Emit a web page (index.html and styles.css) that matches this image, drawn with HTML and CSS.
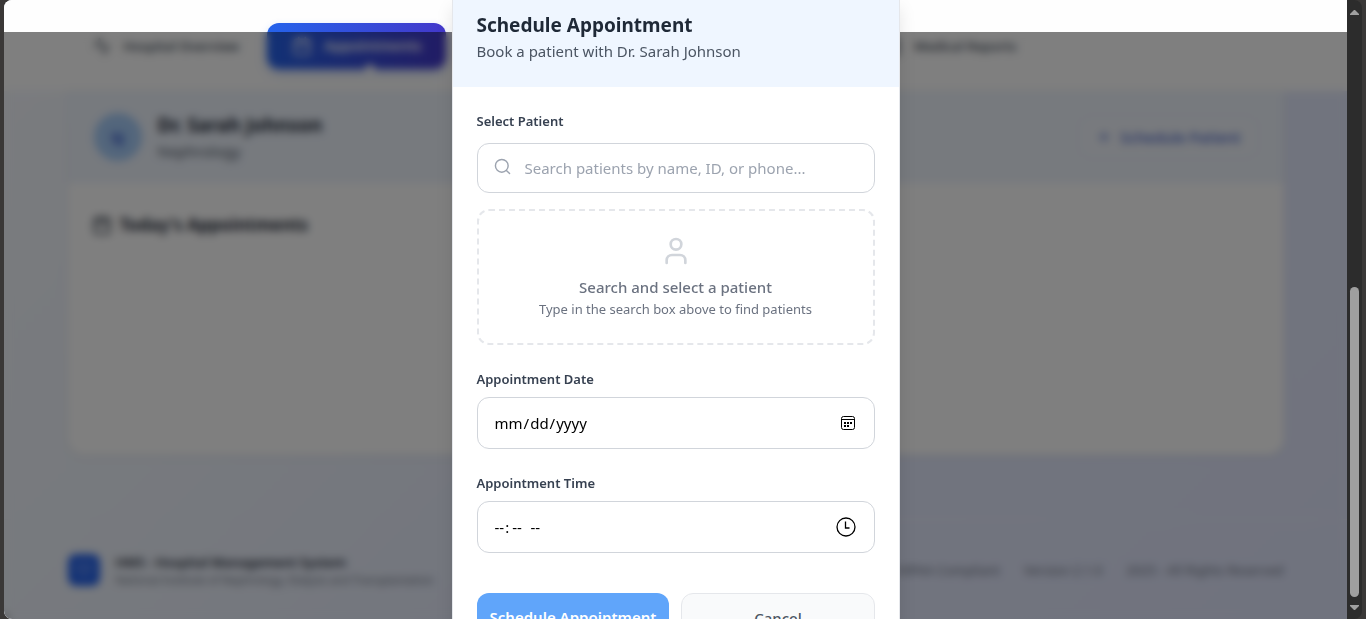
FILE: index.html
```html
<!DOCTYPE html>
<html lang="en">
<head>
<meta charset="utf-8">
<meta name="viewport" content="width=device-width, initial-scale=1">
<title>Schedule Appointment</title>
<link rel="stylesheet" href="styles.css">
</head>
<body>
<div class="window">
  <div class="page">
    <header class="topbar">
      <nav class="container nav">
        <a class="nav-item" href="#overview">
          <svg class="icon" viewBox="0 0 24 24"><path d="M22 12h-4l-3 9L9 3l-3 9H2"/></svg>
          Hospital Overview
        </a>
        <a class="nav-item active" href="#appointments">
          <svg class="icon" viewBox="0 0 24 24"><rect x="3" y="4" width="18" height="18" rx="2"/><path d="M16 2v4M8 2v4M3 10h18"/></svg>
          Appointments
          <span class="nav-pointer"></span>
        </a>
        <span class="nav-space"></span>
        <a class="nav-item" href="#reports">
          <svg class="icon" viewBox="0 0 24 24"><path d="M14 2H6a2 2 0 0 0-2 2v16a2 2 0 0 0 2 2h12a2 2 0 0 0 2-2V8zM14 2v6h6M16 13H8M16 17H8"/></svg>
          Medical Reports
        </a>
      </nav>
    </header>

    <main class="container main">
      <section class="card">
        <div class="doctor">
          <span class="avatar">SJ</span>
          <div class="doctor-text">
            <h1 class="title">Dr. Sarah Johnson</h1>
            <p class="subtitle">Nephrology</p>
          </div>
          <button class="add" type="button">
            <svg class="icon small" viewBox="0 0 24 24"><path d="M12 5v14M5 12h14"/></svg>
            Schedule Patient
          </button>
        </div>
        <div class="today">
          <svg class="icon" viewBox="0 0 24 24"><rect x="3" y="4" width="18" height="18" rx="2"/><path d="M16 2v4M8 2v4M3 10h18"/></svg>
          <h2 class="heading">Today's Appointments</h2>
        </div>
      </section>
    </main>

    <footer class="footer">
      <div class="container footer-row">
        <span class="logo"><svg class="icon small" viewBox="0 0 24 24"><path d="M20.8 4.6a5.5 5.5 0 0 0-7.8 0L12 5.7l-1-1.1a5.5 5.5 0 0 0-7.8 7.8L12 21.2l8.8-8.8a5.5 5.5 0 0 0 0-7.8z"/></svg></span>
        <div class="brand">
          <p class="brand-name">HMS - Hospital Management System</p>
          <p>National Institute of Nephrology, Dialysis and Transplantation</p>
        </div>
        <span>HIPAA Compliant</span>
        <span>Version 2.1.0</span>
        <span>2025 - All Rights Reserved</span>
      </div>
    </footer>

    <div class="backdrop"></div>
    <div class="modal-layer">
      <form class="modal" role="dialog" aria-labelledby="modal-title">
        <div class="modal-head">
          <h2 class="title" id="modal-title">Schedule Appointment</h2>
          <p class="subtitle">Book a patient with Dr. Sarah Johnson</p>
        </div>
        <div class="modal-body">
          <div class="field patient">
            <label class="label" for="patient">Select Patient</label>
            <div class="search">
              <svg class="icon search-icon" viewBox="0 0 24 24"><circle cx="11" cy="11" r="9"/><path d="m22 22-4.500-4.500"/></svg>
              <input class="search-input" id="patient" type="text" placeholder="Search patients by name, ID, or phone...">
            </div>
          </div>
          <div class="empty">
            <svg class="icon user" viewBox="0 0 24 24"><circle cx="12" cy="7" r="4"/><path d="M19 21v-2a4 4 0 0 0-4-4H9a4 4 0 0 0-4 4v2"/></svg>
            <p class="empty-title">Search and select a patient</p>
            <p class="empty-text">Type in the search box above to find patients</p>
          </div>
          <div class="field">
            <label class="label" for="date">Appointment Date</label>
            <input class="input" id="date" type="date">
          </div>
          <div class="field">
            <label class="label" for="time">Appointment Time</label>
            <input class="input" id="time" type="time">
          </div>
          <div class="actions">
            <button class="btn primary" type="submit">Schedule Appointment</button>
            <button class="btn cancel" type="button">Cancel</button>
          </div>
        </div>
      </form>
    </div>
  </div>
  <div class="scrollbar">
    <svg class="arrow" viewBox="0 0 9 5"><path d="M4 0h1l4 4v1H0V4z"/></svg>
    <div class="track"><div class="thumb"></div></div>
    <svg class="arrow" viewBox="0 0 9 5"><path d="M0 0h9v1L5 5H4L0 1z"/></svg>
  </div>
</div>
</body>
</html>
```
FILE: styles.css
```css
* { box-sizing: border-box; }

body {
  margin: 0;
  background: #3a3837;
  color: #1f2937;
  font: 15px/24px "Noto Sans", "Open Sans", sans-serif;
}

h1, h2, p { margin: 0; }
a { color: inherit; text-decoration: none; }
button, input { font: inherit; }

.window {
  display: flex;
  height: 100vh;
  padding: 0 4px;
}

.page {
  position: relative;
  flex: 1;
  min-width: 0;
  overflow: hidden;
  border-radius: 8px 0 0 8px;
  background: linear-gradient(135deg, #f5f8fe, #eff4fc 30%, #e4eafd 65%, #e1e6fd);
}

.container {
  max-width: 1280px;
  margin: 0 auto;
  padding: 0 32px;
}

.icon {
  flex: none;
  width: 20px;
  height: 20px;
  fill: none;
  stroke: currentColor;
  stroke-width: 2;
  stroke-linecap: round;
  stroke-linejoin: round;
}
.icon.small { width: 16px; height: 16px; }

.title { font-size: 19px; line-height: 28px; font-weight: 700; }
.heading { font-size: 17px; line-height: 28px; font-weight: 700; }
.subtitle { color: #4b5563; }

/* Page behind the dialog */
.topbar {
  padding: 23px 0 22px;
  background: #fefefe;
}
.nav { display: flex; gap: 4px; }
.nav-item {
  position: relative;
  display: flex;
  align-items: center;
  gap: 12px;
  padding: 11px 24px;
  border-radius: 12px;
  color: #4b5563;
  font-size: 13px;
  font-weight: 600;
  white-space: nowrap;
}
.nav-item.active {
  padding: 11px 25px;
  background: linear-gradient(90deg, #2563eb, #4338ca);
  box-shadow: 0 4px 8px #2563eb44;
  color: #fff;
  font-size: 14px;
}
.nav-pointer {
  position: absolute;
  bottom: -4px;
  left: 55%;
  width: 8px;
  height: 8px;
  background: #fff;
  transform: rotate(45deg);
}
.nav-space { flex: 0 1 404px; }

.card {
  overflow: hidden;
  min-height: 364px;
  border-radius: 0 0 16px 16px;
  background: #fff;
  box-shadow: 0 1px 4px #0000001a;
}
.doctor {
  display: flex;
  align-items: center;
  gap: 16px;
  padding: 20px 26px;
  background: #eef4fd;
}
.doctor-text { flex: 1; }
.avatar {
  display: grid;
  place-items: center;
  width: 48px;
  height: 48px;
  border-radius: 50%;
  background: #a6ccf8;
  color: #2f50c8;
  font-weight: 700;
}
.add {
  display: flex;
  align-items: center;
  gap: 8px;
  padding: 8px 16px;
  border: 1px solid #e2e9f4;
  border-radius: 12px;
  background: #f1f5fc;
  color: #4361c8;
  font-weight: 500;
}
.today {
  display: flex;
  align-items: center;
  gap: 8px;
  padding: 28px 24px;
}

.footer {
  margin-top: 64px;
  border-top: 1px solid #eceff8;
}
.footer-row {
  display: flex;
  align-items: center;
  gap: 24px;
  padding-top: 32px;
  color: #6b7280;
  font-size: 13px;
  line-height: 16px;
  white-space: nowrap;
}
.logo {
  display: grid;
  place-items: center;
  width: 32px;
  height: 32px;
  margin-right: -8px;
  border-radius: 8px;
  background: #2563eb;
  color: #a9c1f8;
}
.brand { flex: 1; font-size: 11px; }
.brand-name { color: #1f2937; font-size: 13px; line-height: 20px; font-weight: 600; }

/* Dialog */
.backdrop {
  position: absolute;
  inset: 32px 0 0;
  background: #00000080;
  backdrop-filter: blur(4px);
}
.modal-layer {
  position: absolute;
  inset: 0;
  display: flex;
  justify-content: center;
  align-items: flex-start;
}
.modal {
  width: 100%;
  max-width: 448px;
  border: solid #e5e7eb;
  border-width: 0 1px;
  background: #fff;
  box-shadow: 0 8px 16px #0000001a;
}
.modal-head {
  padding: 11px 24px 24px;
  background: #eff6ff;
}
.modal-body {
  display: flex;
  flex-direction: column;
  gap: 24px;
  padding: 24px;
}
.field {
  display: flex;
  flex-direction: column;
  gap: 8px;
}
.patient { gap: 12px; margin-bottom: -8px; }
.label {
  color: #374151;
  font-size: 13px;
  line-height: 20px;
  font-weight: 600;
}
.search, .input {
  border: 1px solid #d1d5db;
  border-radius: 12px;
  background: #fff;
}
.search {
  display: flex;
  align-items: center;
  gap: 14px;
  padding: 0 16px;
}
.search-icon {
  width: 17px;
  height: 17px;
  margin-bottom: 4px;
  color: #9ca3af;
}
.search-input {
  flex: 1;
  min-width: 0;
  height: 48px;
  padding: 0;
  border: 0;
  outline: 0;
  background: none;
}
.search-input::placeholder { color: #9ca3af; }
.input {
  height: 52px;
  padding: 0 18px 0 16px;
  color: #000;
}
.input::-webkit-calendar-picker-indicator {
  width: 16px;
  height: 16px;
  padding: 0;
  background: url("data:image/svg+xml,%3Csvg xmlns='http://www.w3.org/2000/svg' viewBox='0 0 16 16'%3E%3Crect x='1.500' y='1.500' width='13' height='13' rx='2' fill='none' stroke='black'/%3E%3Cpath d='M2 4.500h12' stroke='black'/%3E%3Cpath d='M4 7h2v2H4zM7 7h2v2H7zM10 7h2v2h-2zM4 10h2v2H4zM7 10h2v2H7z'/%3E%3C/svg%3E") center / contain no-repeat;
}
.input[type="time"]::-webkit-calendar-picker-indicator {
  width: 20px;
  height: 20px;
  background-image: url("data:image/svg+xml,%3Csvg xmlns='http://www.w3.org/2000/svg' viewBox='0 0 20 20' fill='none' stroke='black' stroke-width='1.3'%3E%3Ccircle cx='10' cy='10' r='9'/%3E%3Cpath d='M9.5 4.500v6.500h4'/%3E%3C/svg%3E");
}
.input::-webkit-datetime-edit-minute-field,
.input::-webkit-datetime-edit-ampm-field { padding: 0 3px; }
.empty {
  display: flex;
  flex-direction: column;
  align-items: center;
  padding: 24px;
  border: 2px dashed #e5e7eb;
  border-radius: 12px;
  color: #6b7280;
  text-align: center;
}
.user {
  width: 32px;
  height: 32px;
  margin-bottom: 8px;
  color: #d1d5db;
}
.empty-title { font-weight: 500; }
.empty-text { font-size: 13px; line-height: 20px; }
.actions {
  display: flex;
  align-items: flex-start;
  gap: 12px;
  padding-top: 16px;
}
.btn {
  flex: 1 1 auto;
  width: 50%;
  padding: 12px 0;
  border: 0;
  border-radius: 12px;
  font-weight: 600;
  white-space: nowrap;
}
.primary { background: #60a5fa; color: #fff; }
.cancel {
  border: 1px solid #e5e7eb;
  background: #f9fafb;
  color: #4b5563;
  font-weight: 500;
}

/* Window scrollbar */
.scrollbar {
  display: flex;
  flex-direction: column;
  align-items: center;
  gap: 8px;
  width: 15px;
  padding: 10px 0 9px;
  border-radius: 0 8px 8px 0;
  background: #2c2c2c;
}
.arrow { width: 9px; height: 5px; fill: #9f9f9f; }
.track {
  display: flex;
  flex: 1;
  align-items: flex-end;
}
.thumb {
  width: 9px;
  height: 54%;
  border-radius: 5px;
  background: #9f9f9f;
}
```
